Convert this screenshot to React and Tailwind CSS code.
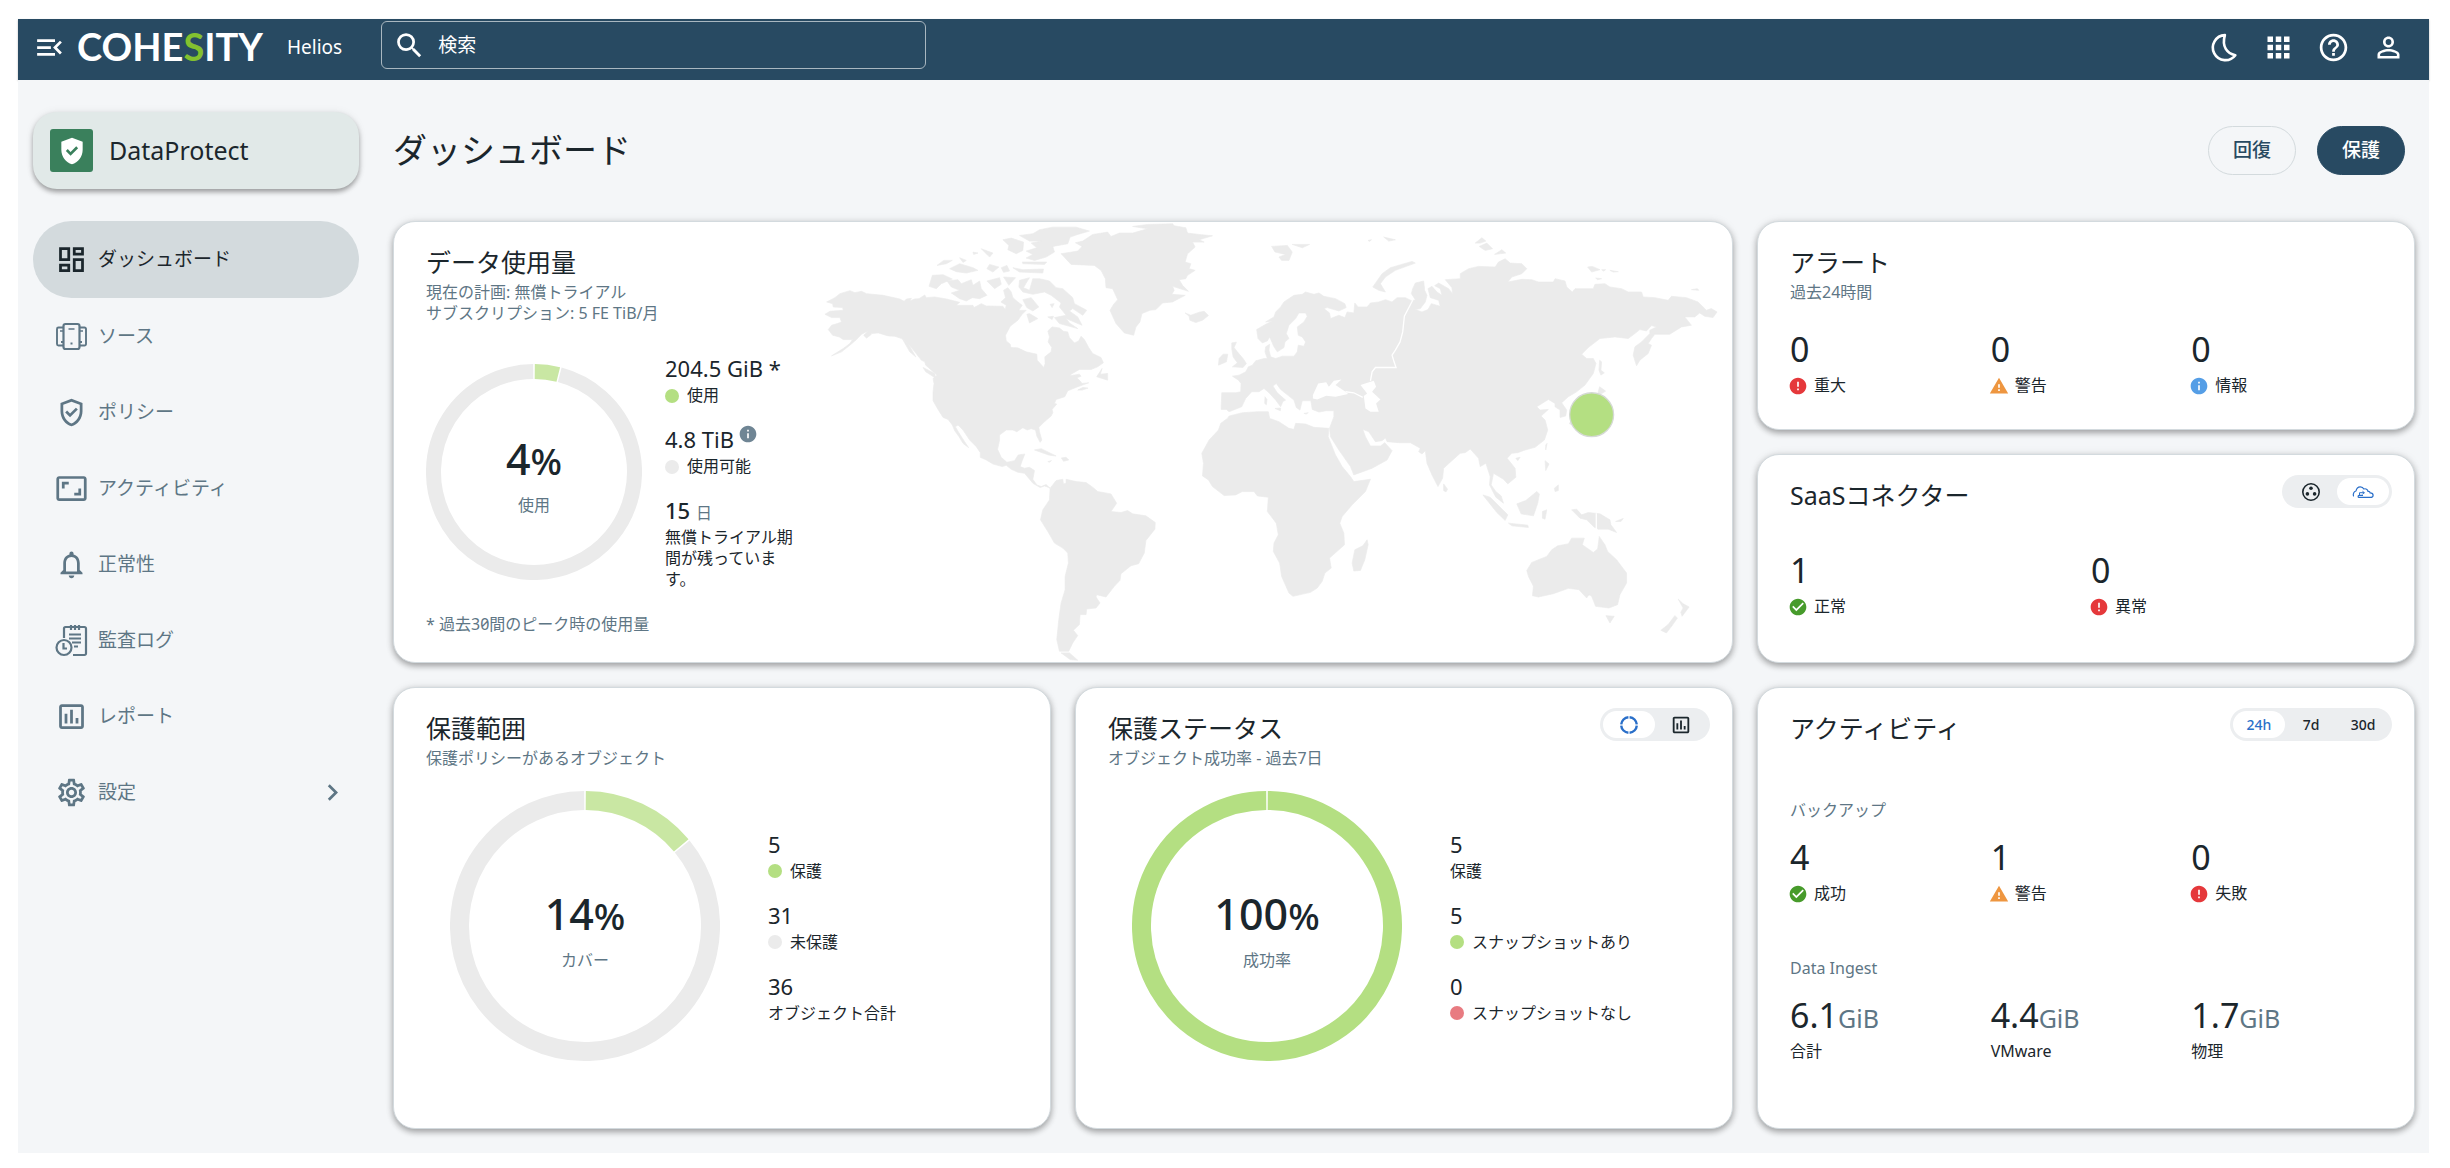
import React from "react";
import {
  MdMenuOpen,
  MdSearch,
  MdApps,
  MdHelpOutline,
  MdPersonOutline,
  MdOutlineDashboard,
  MdOutlineGppGood,
  MdGppGood,
  MdOutlineAspectRatio,
  MdNotificationsNone,
  MdOutlineAssessment,
  MdOutlineSettings,
  MdChevronRight,
  MdError,
  MdWarning,
  MdInfo,
  MdCheckCircle,
} from "react-icons/md";

/* ---------- icons that the icon set lacks ---------- */

function MoonIcon() {
  return (
    <svg viewBox="0 0 24 24" className="size-[33px]" fill="none" stroke="currentColor" strokeWidth="1.9" strokeLinejoin="round">
      <path d="M13 3A9.1 9.1 0 1 0 20.6 17.6C14.6 16.4 10.6 11.5 13 3z" />
    </svg>
  );
}

function SourcesIcon() {
  return (
    <svg viewBox="0 0 33 33" className="size-[33px]" fill="none" stroke="currentColor" strokeWidth="2.200">
      <rect x="8.500" y="4" width="16" height="25" rx="2" />
      <path d="M8 7.500H3.500a1.500 1.500 0 0 0-1.500 1.500v15a1.500 1.500 0 0 0 1.500 1.500H8M25 7.500h4.500a1.500 1.500 0 0 1 1.500 1.500v15a1.500 1.500 0 0 1-1.500 1.500H25" strokeWidth="1.900" />
      <path d="M13.500 9h6M5 11h3M25 11h3" strokeWidth="1.600" />
      <path d="M15.500 23.500h2M6 22H8M25 22h2" strokeWidth="2" />
    </svg>
  );
}

function AuditIcon() {
  return (
    <svg viewBox="0 0 33 33" className="size-[33px]" fill="none" stroke="currentColor" strokeWidth="2.200">
      <path d="M9 14V4.500A1.500 1.500 0 0 1 10.500 3h19A1.500 1.500 0 0 1 31 4.500v25a1.500 1.500 0 0 1-1.500 1.500H18" />
      <path d="M16 1v5M20 1v5M24 1v5" />
      <path d="M14 10.500h12M14 14.500h12M17 18.500h9M19 22.500h4" strokeWidth="2" />
      <circle cx="9" cy="23.500" r="7.500" />
      <path d="M8.500 19v5.500H12" />
    </svg>
  );
}

function ClusterIcon() {
  return (
    <svg viewBox="0 0 20 20" className="size-5" fill="none" stroke="currentColor" strokeWidth="1.600">
      <circle cx="10" cy="10" r="8.200" />
      <g fill="currentColor" stroke="none">
        <circle cx="10" cy="6.300" r="1.800" />
        <circle cx="6.400" cy="11.900" r="1.800" />
        <circle cx="13.600" cy="11.900" r="1.800" />
      </g>
    </svg>
  );
}

function CloudIcon() {
  return (
    <svg viewBox="0 0 22 14" className="h-3.5 w-[22px]" fill="none" stroke="currentColor" strokeWidth="1.200" strokeLinecap="round" strokeLinejoin="round">
      <path d="M1.500 11C.8 8.800 1.800 6.600 4 6c.4-2.300 2-4.200 4.300-4.200 2 0 3 1 3.500 2.200 2-.7 3.900.3 4.200 2.400 1.400-.2 2 .5 2.100 1.500 1.800 0 3 1 3 2.300 0 1.300-1 2.200-2.600 2.200H7c-1.200 0-1.200-2 0-2h3.500" />
      <path d="M7.500 9.800V7.700h4.500M10.800 6.500l1.500 1.200-1.500 1.200" strokeWidth="1" />
    </svg>
  );
}

function RingIcon() {
  return (
    <svg viewBox="0 0 20 20" className="size-5" fill="none" stroke="currentColor" strokeWidth="2.400">
      <circle cx="10" cy="10" r="7.800" pathLength="100" strokeDasharray="22.500 2.500" strokeDashoffset="-1.250" />
    </svg>
  );
}

/* ---------- building blocks ---------- */

function Card({ className = "", children }) {
  return (
    <section
      className={
        "min-h-0 overflow-hidden rounded-[22px] border border-[#d3dade] bg-white shadow-[0_3px_6px_rgba(0,0,0,0.32),0_0_10px_rgba(0,0,0,0.08)] " +
        className
      }
    >
      {children}
    </section>
  );
}

function CardHeader({ title, subtitle, children }) {
  return (
    <header className="flex items-start justify-between">
      <div className="pt-1">
        <h2 className="text-[25px] leading-8">{title}</h2>
        {subtitle && <div className="mt-1 text-base leading-[21px] text-[#5e7685]">{subtitle}</div>}
      </div>
      {children}
    </header>
  );
}

function Toggle({ label, items }) {
  return (
    <div role="group" aria-label={label} className="flex h-[33px] rounded-full bg-[#eceef0] p-[3px]">
      {items.map((it) => (
        <button
          key={it.name}
          type="button"
          aria-label={it.name}
          aria-pressed={!!it.on}
          className={
            "flex w-[52px] items-center justify-center rounded-full text-sm font-medium " +
            (it.on ? "bg-white text-[#2a6fc9]" : "")
          }
        >
          {it.content}
        </button>
      ))}
    </div>
  );
}

function arc(r, a0, a1) {
  const p = (a) => {
    const t = ((a - 90) * Math.PI) / 180;
    return `${(r * Math.cos(t)).toFixed(2)} ${(r * Math.sin(t)).toFixed(2)}`;
  };
  return `M${p(a0)}A${r} ${r} 0 ${a1 - a0 > 180 ? 1 : 0} 1 ${p(a1)}`;
}

function Donut({ value, label, size, thickness, sizeClass, color }) {
  const r = (size - thickness) / 2;
  const half = size / 2;
  const gap = (1.5 / r) * (180 / Math.PI);
  const end = value * 3.6;
  return (
    <div className={"grid shrink-0 " + sizeClass}>
      <svg
        viewBox={`${-half} ${-half} ${size} ${size}`}
        className="col-start-1 row-start-1 size-full"
        fill="none"
        strokeWidth={thickness}
        aria-hidden="true"
      >
        <path d={arc(r, gap / 2, end - gap / 2)} stroke={color} />
        {value < 100 && <path d={arc(r, end + gap / 2, 360 - gap / 2)} stroke="#ebebeb" />}
      </svg>
      <div className="col-start-1 row-start-1 flex flex-col items-center justify-center pt-2">
        <div className="text-[43px] leading-[48px] font-medium">
          {value}
          <span className="text-[37px] leading-none">%</span>
        </div>
        <div className="mt-3 text-base leading-[21px] text-[#5e7685]">{label}</div>
      </div>
    </div>
  );
}

function LegendItem({ value, label, dot }) {
  return (
    <div>
      <div className="text-[22px] leading-[30px]">{value}</div>
      <div className="mt-0.5 flex items-center gap-2 text-base leading-[21px]">
        {dot && <span className={"size-3.5 shrink-0 rounded-full " + dot} />}
        {label}
      </div>
    </div>
  );
}

function Stat({ value, unit, label, icon }) {
  return (
    <div>
      <div className="text-[34px] leading-[44px]">
        {value}
        {unit && <span className="text-[25px] leading-none text-[#5e7685]">{unit}</span>}
      </div>
      <div className="mt-1 flex items-center gap-1.5 text-base leading-[21px]">
        {icon}
        {label}
      </div>
    </div>
  );
}

const ok = <MdCheckCircle className="-ml-0.5 size-5 text-[#479b2b]" />;
const bad = <MdError className="-ml-0.5 size-5 text-[#e5383b]" />;
const warn = <MdWarning className="-ml-0.5 size-5 text-[#ee9640]" />;
const info = <MdInfo className="-ml-0.5 size-5 text-[#559ee6]" />;

/* ---------- world map ---------- */

const AMERICAS = [
  "80 275 105 262 120 250 150 241 165 247 185 243 200 250 250 255 300 266 313 273 320 266 335 264 330 272 345 266 358 265 375 254 380 262 405 260 440 266 480 276 470 285 520 285 523 292 545 280 560 287 610 288 617 298 620 285 604 275 618 262 612 240 625 232 635 245 640 262 655 275 668 285 658 300 680 300 668 312 655 330 632 348 618 375 620 392 632 402 634 412 655 413 680 425 712 432 713 450 733 472 737 460 736 440 755 425 757 412 746 395 750 380 745 362 758 350 780 353 792 363 805 365 810 382 825 398 838 392 845 378 855 388 868 412 880 430 905 442 912 458 895 470 875 478 840 478 815 492 812 497 840 492 845 498 832 503 842 512 848 520 868 518 835 530 805 542 796 560 770 568 765 580 772 582 758 598 760 608 755 618 735 635 718 652 720 665 727 690 722 697 712 678 708 660 695 656 683 660 670 653 652 665 640 660 620 660 600 675 600 690 594 718 605 742 622 757 645 752 656 735 676 732 668 752 662 770 675 775 690 772 705 782 700 808 712 825 725 830 740 824 752 835 746 832 735 828 722 833 700 820 692 810 675 790 655 787 635 778 620 766 608 770 580 762 560 750 542 742 542 728 530 710 510 690 490 660 475 645 467 650 480 672 495 695 507 713 490 700 478 680 465 662 458 645 445 628 430 622 415 598 400 572 400 545 403 520 400 505 412 495 395 480 378 465 375 455 365 450 345 425 325 400 305 385 285 378 265 377 235 368 215 370 200 380 192 375 205 362 185 372 170 388 150 405 125 425 95 437 130 415 150 400 158 388 130 388 118 380 98 375 85 358 95 345 112 340 125 335 120 322 95 322 75 312 90 303 130 300 128 292 100 290 98 280",
  "752 835 770 812 790 808 792 822 800 820 800 808 830 815 860 818 880 832 895 845 935 852 952 880 935 905 965 908 985 902 1000 912 1040 918 1068 938 1067 958 1040 992 1035 1030 1018 1062 995 1068 965 1092 962 1112 945 1130 920 1162 892 1155 890 1162 902 1180 890 1195 862 1198 860 1215 842 1215 840 1245 822 1262 835 1278 820 1300 808 1325 780 1325 772 1290 778 1230 785 1180 797 1140 797 1100 807 1060 805 1030 790 1015 765 1000 745 965 723 930 730 900 750 870",
  "785 130 835 122 848 108 828 97 850 92 880 72 925 65 935 78 960 68 1000 68 1045 55 1000 48 1045 42 1120 40 1125 46 1160 52 1165 68 1200 72 1240 76 1200 88 1215 95 1180 95 1188 110 1165 130 1158 155 1175 160 1170 175 1188 180 1165 195 1160 205 1140 208 1150 225 1168 243 1120 228 1125 240 1118 252 1158 255 1120 275 1090 278 1070 298 1052 300 1028 310 1022 335 1010 350 1003 375 975 368 950 340 932 300 943 282 955 268 940 235 920 232 918 205 905 180 885 165 815 162",
  "1158 308 1175 315 1200 306 1215 303 1228 316 1210 330 1190 337 1172 330 1170 318",
  "398 195 430 193 458 206 425 220 410 235 388 228",
  "442 212 475 208 485 220 515 208 520 225 540 212 545 235 562 255 540 265 518 262 500 272 480 265 455 248 480 240 455 230",
  "610 88 635 83 672 95 670 120 650 130 625 118 628 105",
  "660 75 700 70 720 58 760 50 830 50 870 62 835 72 812 80 805 100 760 108 765 125 740 140 705 150 680 143 700 132 680 122 712 112 695 98 725 92 690 92",
  "668 155 742 155 735 162 670 160", "640 172 660 185 730 188 732 176 670 178",
  "412 165 432 150 458 150 440 160", "450 175 480 160 520 172 535 180 500 188 470 184", "545 115 580 128 570 140", "570 162 598 170 580 185 562 175",
  "605 172 622 165 630 182 612 186", "562 212 600 202 605 222 585 235", "612 200 648 202 628 225", "480 142 500 150 490 156", "520 125 535 128 522 132",
  "660 210 690 202 680 218 672 232 690 240 700 205 720 205 750 212 770 232 790 235 820 262 825 280 862 300 850 315 820 295 810 302 835 320 848 345 800 325 810 338 835 355 780 340 765 322 800 315 780 290 785 278 755 255 735 245 700 252 670 245 658 230",
  "670 268 695 262 718 290 700 302 682 292", "682 312 690 310 715 325 690 338", "745 320 762 318 758 328", "752 282 764 280 758 292",
  "908 475 903 492 925 490 925 510 892 500", "835 540 850 532 866 534 848 540",
  "310 390 325 400 348 440 330 425", "370 472 405 490 408 504 378 485", "192 375 215 372 200 384",
  "705 720 725 716 770 738 750 736", "786 744 800 742 808 750 792 754", "745 755 756 752 750 757",
  "785 1330 810 1330 835 1352 812 1350",
];

const OLD_WORLD = [
  "-52 548 -10 548 5 545 6 520 -2 510 -20 498 0 495 20 485 28 470 40 465 50 452 75 445 85 445 78 425 80 410 92 402 90 420 95 440 110 445 130 438 165 438 175 425 178 405 195 408 200 395 190 380 178 375 175 350 195 335 205 318 200 308 180 308 170 325 150 345 142 370 150 385 138 395 135 412 115 425 105 410 92 380 85 392 70 398 57 385 53 358 75 345 100 332 80 335 105 320 110 305 125 290 135 275 165 255 190 252 200 245 225 252 240 248 255 258 275 262 290 265 318 280 322 292 300 302 265 292 255 295 272 308 275 325 300 315 318 322 325 305 345 308 348 278 358 290 385 290 395 278 420 275 440 268 460 275 475 262 500 262 520 272 530 268 518 250 522 235 530 218 555 212 558 240 565 255 560 275 545 295 530 298 550 305 568 298 578 280 605 288 600 270 575 262 568 235 580 228 595 245 610 255 605 235 588 226 600 218 630 235 642 250 640 232 620 208 665 205 665 190 690 175 720 168 770 170 780 155 800 145 815 158 850 160 865 175 850 190 820 200 808 215 850 207 880 208 900 215 945 215 950 205 980 212 985 230 1002 245 1010 235 1065 235 1070 222 1100 220 1115 230 1150 235 1170 245 1210 245 1215 260 1250 262 1290 270 1300 258 1345 262 1380 275 1405 300 1420 295 1437 305 1425 322 1400 318 1385 308 1370 320 1340 320 1360 345 1330 350 1295 372 1250 372 1240 385 1230 400 1240 405 1230 430 1205 450 1195 467 1185 435 1190 410 1210 395 1235 370 1235 360 1255 350 1240 346 1225 362 1205 358 1190 370 1170 385 1130 380 1085 385 1050 412 1030 432 1045 445 1065 445 1073 460 1065 490 1040 525 1015 545 990 560 970 578 985 600 982 618 965 622 965 600 950 590 950 580 930 568 895 590 905 600 930 598 908 618 920 630 928 660 918 690 890 712 860 720 838 728 820 730 806 745 830 775 832 802 808 822 795 808 765 790 758 825 772 845 788 858 795 880 772 862 753 825 755 800 742 760 725 770 720 745 695 717 680 728 665 730 640 752 615 775 612 805 598 830 580 795 565 760 560 722 550 732 540 725 545 715 515 698 480 698 445 695 440 684 430 692 410 695 390 665 372 658 380 680 395 708 425 708 438 698 460 722 445 750 400 775 345 795 335 770 300 720 275 680 272 655 285 620 285 602 262 602 240 606 220 598 216 572 190 572 183 600 172 592 165 570 150 558 125 538 112 520 102 528 115 548 140 570 132 574 125 590 110 570 90 548 75 535 60 545 38 545 20 565 8 590 -30 605 -38 598 -54 598",
  "-30 618 10 608 55 605 88 605 92 625 120 635 150 655 165 658 170 640 200 642 225 652 270 655 268 680 290 735 310 770 335 800 345 815 395 808 380 845 340 885 310 920 303 940 315 970 317 1005 272 1045 277 1075 258 1090 250 1115 235 1135 215 1148 162 1160 150 1150 128 1100 122 1060 103 1025 105 1000 118 975 112 940 85 905 88 862 55 858 45 845 10 845 -10 855 -45 857 -80 830 -92 810 -110 798 -107 760 -112 730 -90 690 -62 660 -55 640 -35 625",
  "385 990 388 1005 378 1050 365 1082 345 1084 340 1060 348 1020 372 1008",
  "865 1082 880 1058 925 1040 940 1020 958 1008 975 1005 990 1002 1000 985 1038 985 1032 1005 1065 1028 1078 1018 1083 980 1100 1005 1108 1025 1135 1050 1165 1090 1165 1120 1145 1155 1138 1185 1112 1195 1072 1190 1060 1160 1052 1155 1045 1165 1022 1140 990 1136 945 1152 900 1162 882 1158 885 1130 870 1100",
  "1103 1218 1128 1220 1115 1240", "1320 1168 1335 1182 1353 1192 1332 1220 1328 1208 1335 1195", "1310 1218 1318 1225 1302 1248 1285 1270 1268 1262 1290 1245",
  "1000 900 1015 898 1030 915 1050 908 1085 912 1115 930 1118 945 1135 968 1110 958 1080 958 1068 952 1045 930 1025 925",
  "1132 935 1155 926 1148 935", "835 882 862 872 895 845 903 852 898 880 885 918 848 912", "733 855 755 862 808 915 800 932 775 908",
  "810 940 868 946 870 953 820 948", "912 905 925 900 920 928 912 925", "615 822 627 838 622 846 615 842", "832 745 845 742 838 752",
  "920 752 932 762 922 782", "948 835 960 825 960 842 950 845", "922 705 926 700 922 720",
  "1084 450 1090 455 1088 480 1098 488 1088 495 1082 480", "1084 530 1102 543 1088 552 1078 552",
  "1084 552 1090 580 1070 605 1060 630 1000 645 992 640 1040 610",
  "402 230 430 190 455 172 520 153 530 158 470 180 440 200 425 220 440 245 420 240",
  "710 98 730 82 742 92 725 98", "722 108 745 98 762 115 740 120", "768 132 790 118 802 128", "1048 170 1062 168 1085 178 1060 185", "1090 178 1102 178 1096 182", "1115 180 1140 184 1125 185", "1072 203 1090 205 1078 208", "1360 238 1378 235 1382 240",
  "98 108 145 105 160 125 150 150 128 150 120 140 140 132 108 125", "160 102 212 102 190 112", "388 90 398 88 392 93", "435 80 470 88 450 92",
  "-22 398 -8 396 -15 412 -5 425 12 445 22 460 12 472 -20 470 -5 458 -18 440 -22 415", "-62 465 -60 445 -48 432 -34 432 -38 455",
  "78 560 84 568 82 584 77 580", "108 595 125 594 124 602", "195 610 208 608 202 612",
];

const toPath = (list) => list.map((p) => "M" + p + "Z").join("");

function WorldMap() {
  return (
    <svg viewBox="0 36 2802 1320" preserveAspectRatio="xMaxYMid meet" className="size-full" role="img" aria-label="データセンターの所在地">
      <path d={toPath(AMERICAS)} fill="#ebebeb" stroke="#ebebeb" strokeWidth="2" strokeLinejoin="round" />
      <g transform="translate(1320 0)">
        <path d={toPath(OLD_WORLD)} fill="#ebebeb" stroke="#ebebeb" strokeWidth="2" strokeLinejoin="round" />
        <path
          fill="#fff"
          d="M222 555 238 520 262 516 270 530 285 512 308 508 290 525 320 545 328 552 290 560 262 557 235 568 222 565ZM365 525 405 512 412 530 400 545 425 568 412 580 420 605 395 605 380 595 375 558 385 550Z"
        />
        <path
          fill="none"
          stroke="#fff"
          strokeWidth="4"
          d="M522 270 497 318 492 365 484 395 470 420 460 435 466 455 472 472 410 472 400 485 395 512M320 545 345 548 372 562M1074 910V960"
        />
        <circle cx="1060" cy="614" r="66" fill="#b4df82" stroke="#d5d9d5" strokeWidth="4" />
      </g>
    </svg>
  );
}

/* ---------- page ---------- */

const NAV = [
  { label: "ダッシュボード", Icon: MdOutlineDashboard, active: true },
  { label: "ソース", Icon: SourcesIcon },
  { label: "ポリシー", Icon: MdOutlineGppGood },
  { label: "アクティビティ", Icon: MdOutlineAspectRatio },
  { label: "正常性", Icon: MdNotificationsNone },
  { label: "監査ログ", Icon: AuditIcon },
  { label: "レポート", Icon: MdOutlineAssessment },
  { label: "設定", Icon: MdOutlineSettings, more: true },
];

function TopBar() {
  return (
    <header className="flex h-[61px] items-center bg-[#284a62] pr-6 pb-1 pl-[15px] text-white shadow-[0_1px_2px_rgba(0,0,0,0.25)]">
      <button type="button" aria-label="メニュー" className="shrink-0">
        <MdMenuOpen className="size-[33px]" />
      </button>
      <a href="#home" className="ml-[11px] flex shrink-0 items-center">
        <span className="w-[189px] pb-1 font-[Lato] text-[38px] leading-10 font-bold whitespace-nowrap">
          COHE<span className="text-[#83c12f]">S</span>ITY
        </span>
        <span className="ml-[21px] text-[19px]">Helios</span>
      </a>
      <label className="mt-0.5 ml-[39px] flex h-12 w-[545px] items-center self-start rounded-md border border-[#a9b7c0] pl-[11px]">
        <MdSearch className="size-[33px] shrink-0" />
        <input
          type="text"
          aria-label="検索"
          placeholder="検索"
          className="ml-3 min-w-0 flex-1 bg-transparent text-[19px] outline-none placeholder:text-white"
        />
      </label>
      <div className="ml-auto flex gap-[22px]">
        <button type="button" aria-label="ダークモード"><MoonIcon /></button>
        <button type="button" aria-label="アプリ"><MdApps className="size-[33px]" /></button>
        <button type="button" aria-label="ヘルプ"><MdHelpOutline className="size-[33px]" /></button>
        <button type="button" aria-label="アカウント"><MdPersonOutline className="size-[33px]" /></button>
      </div>
    </header>
  );
}

function Sidebar() {
  return (
    <aside className="w-[375px] shrink-0 pt-8 pr-[34px] pl-[15px]">
      <button
        type="button"
        className="flex h-[77px] w-full items-center gap-4 rounded-3xl bg-[#e1e9e8] pl-[17px] text-[25px] shadow-[0_3px_5px_rgba(0,0,0,0.35),0_0_10px_rgba(0,0,0,0.06)]"
      >
        <span className="flex size-[43px] items-center justify-center rounded-[3px] bg-[#3a805c] text-white">
          <MdGppGood className="size-8" />
        </span>
        DataProtect
      </button>
      <nav className="mt-8">
        {NAV.map(({ label, Icon, active, more }) => (
          <a
            key={label}
            href="#nav"
            aria-current={active ? "page" : undefined}
            className={
              "flex items-center rounded-full pr-2.5 pl-[22px] text-[19px] " +
              (active ? "h-[77px] bg-[#d3dadd]" : "h-[76px] text-[#5e7685]")
            }
          >
            <Icon className="size-[33px]" />
            <span className="ml-2.5">{label}</span>
            {more && <MdChevronRight className="ml-auto size-[33px]" />}
          </a>
        ))}
      </nav>
    </aside>
  );
}

export default function App() {
  return (
    <div className="flex min-h-screen flex-col bg-white pt-[19px] pr-[21px] pb-[15px] pl-[18px] font-['Noto_Sans','Noto_Sans_CJK_JP',sans-serif] text-[#1b262c]">
      <TopBar />
      <div className="flex flex-1 bg-[#f4f6f8]">
        <Sidebar />
        <main className="flex min-w-0 flex-1 flex-col pr-3.5 pb-6">
          <div className="flex items-center justify-between py-[46px] pr-2.5">
            <h1 className="text-[34px] leading-[49px]">ダッシュボード</h1>
            <div className="flex gap-[21px] text-[19px] font-medium">
              <button type="button" className="h-[49px] rounded-full border border-[#d3dadd] px-6 text-[#284a62]">回復</button>
              <button type="button" className="h-[49px] rounded-full border border-[#284a62] bg-[#284a62] px-6 text-white">保護</button>
            </div>
          </div>

          <div className="grid flex-1 grid-cols-3 grid-rows-2 gap-6">
            <Card className="col-span-2 flex">
              <div className="w-[406px] shrink-0 pt-5 pl-8">
                <CardHeader
                  title="データ使用量"
                  subtitle={
                    <>
                      <p>現在の計画: 無償トライアル</p>
                      <p>サブスクリプション: 5 FE TiB/月</p>
                    </>
                  }
                />
                <div className="mt-[29px] flex items-center gap-[23px]">
                  <Donut value={4} label="使用" size={216} thickness={15} sizeClass="size-[216px]" color="#c9e7a3" />
                  <div className="flex min-w-0 flex-1 flex-col gap-[18px]">
                    <LegendItem value="204.5 GiB *" label="使用" dot="bg-[#b4df82]" />
                    <LegendItem
                      value={
                        <span className="flex gap-1">
                          4.8 TiB <MdInfo className="size-5 text-[#6f8594]" />
                        </span>
                      }
                      label="使用可能"
                      dot="bg-[#ebebeb]"
                    />
                    <LegendItem
                      value={
                        <>
                          <span className="font-medium">15</span>{" "}
                          <span className="text-base leading-none text-[#5e7685]">日</span>
                        </>
                      }
                      label="無償トライアル期間が残っています。"
                    />
                  </div>
                </div>
                <p className="mt-6 text-base leading-[21px] text-[#5e7685]">
                  * 過去<span className="slashed-zero">30</span>間のピーク時の使用量
                </p>
              </div>
              <div className="min-w-0 flex-1">
                <WorldMap />
              </div>
            </Card>

            <div className="grid grid-rows-2 gap-6">
              <Card className="pt-5 pr-[22px] pl-8">
                <CardHeader title="アラート" subtitle="過去24時間" />
                <div className="mt-6 grid grid-cols-3">
                  <Stat value="0" label="重大" icon={bad} />
                  <Stat value="0" label="警告" icon={warn} />
                  <Stat value="0" label="情報" icon={info} />
                </div>
              </Card>
              <Card className="pt-5 pr-[22px] pl-8">
                <CardHeader title="SaaSコネクター">
                  <Toggle
                    label="コネクター表示"
                    items={[
                      { name: "クラスター", content: <ClusterIcon /> },
                      { name: "クラウド", content: <CloudIcon />, on: true },
                    ]}
                  />
                </CardHeader>
                <div className="mt-[37px] grid grid-cols-2">
                  <Stat value="1" label="正常" icon={ok} />
                  <Stat value="0" label="異常" icon={bad} />
                </div>
              </Card>
            </div>

            <Card className="pt-5 pr-[22px] pl-8">
              <CardHeader title="保護範囲" subtitle="保護ポリシーがあるオブジェクト" />
              <div className="mt-[22px] flex items-center gap-12 pl-6">
                <Donut value={14} label="カバー" size={270} thickness={19} sizeClass="size-[270px]" color="#c9e7a3" />
                <div className="flex flex-col gap-[18px]">
                  <LegendItem value="5" label="保護" dot="bg-[#b4df82]" />
                  <LegendItem value="31" label="未保護" dot="bg-[#ebebeb]" />
                  <LegendItem value="36" label="オブジェクト合計" />
                </div>
              </div>
            </Card>

            <Card className="pt-5 pr-[22px] pl-8">
              <CardHeader title="保護ステータス" subtitle="オブジェクト成功率 - 過去7日">
                <Toggle
                  label="グラフ表示"
                  items={[
                    { name: "リング", content: <RingIcon />, on: true },
                    { name: "棒グラフ", content: <MdOutlineAssessment className="size-[22px]" /> },
                  ]}
                />
              </CardHeader>
              <div className="mt-[22px] flex items-center gap-12 pl-6">
                <Donut value={100} label="成功率" size={270} thickness={19} sizeClass="size-[270px]" color="#b4df82" />
                <div className="flex flex-col gap-[18px]">
                  <LegendItem value="5" label="保護" />
                  <LegendItem value="5" label="スナップショットあり" dot="bg-[#b4df82]" />
                  <LegendItem value="0" label="スナップショットなし" dot="bg-[#e87b81]" />
                </div>
              </div>
            </Card>

            <Card className="pt-5 pr-[22px] pl-8">
              <CardHeader title="アクティビティ">
                <Toggle
                  label="期間"
                  items={[
                    { name: "24h", content: "24h", on: true },
                    { name: "7d", content: "7d" },
                    { name: "30d", content: "30d" },
                  ]}
                />
              </CardHeader>
              <h3 className="mt-14 text-base leading-[21px] text-[#5e7685]">バックアップ</h3>
              <div className="mt-3.5 grid grid-cols-3">
                <Stat value="4" label="成功" icon={ok} />
                <Stat value="1" label="警告" icon={warn} />
                <Stat value="0" label="失敗" icon={bad} />
              </div>
              <h3 className="mt-[54px] text-base leading-[21px] text-[#5e7685]">Data Ingest</h3>
              <div className="mt-3.5 grid grid-cols-3">
                <Stat value="6.1" unit="GiB" label="合計" />
                <Stat value="4.4" unit="GiB" label="VMware" />
                <Stat value="1.7" unit="GiB" label="物理" />
              </div>
            </Card>
          </div>
        </main>
      </div>
    </div>
  );
}
